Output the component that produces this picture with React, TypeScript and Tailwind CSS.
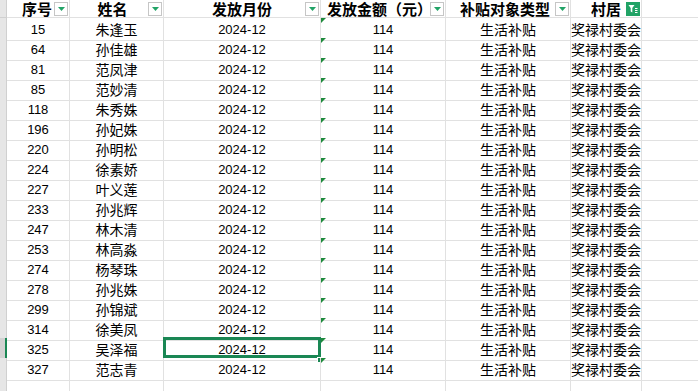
import React from 'react';

const rows: [string, string][] = [
  ['15', '朱逢玉'],
  ['64', '孙佳雄'],
  ['81', '范凤津'],
  ['85', '范妙清'],
  ['118', '朱秀姝'],
  ['196', '孙妃姝'],
  ['220', '孙明松'],
  ['224', '徐素娇'],
  ['227', '叶义莲'],
  ['233', '孙兆辉'],
  ['247', '林木清'],
  ['253', '林高淼'],
  ['274', '杨琴珠'],
  ['278', '孙兆姝'],
  ['299', '孙锦斌'],
  ['314', '徐美凤'],
  ['325', '吴泽福'],
  ['327', '范志青'],
];

const cols = 'grid grid-cols-[7px_63px_94px_157px_125px_125px_71px_1fr]';
const cell = 'relative flex items-center justify-center border-r border-b border-[#e1e1e1]';
const cjk = "font-['Noto_Sans_CJK_SC',sans-serif]";
const num = "font-['Liberation_Sans',Arial,sans-serif]";
// latin font first keeps the header line box inside the 17px row; CJK glyphs fall back to Noto
const head = `${cell} font-['Liberation_Sans','Noto_Sans_CJK_SC',sans-serif] font-bold text-[15px] leading-[17px]`;

function FilterBtn() {
  return (
    <span className="absolute right-[1px] top-[2px] w-[14px] h-[14px] bg-white border border-[#c6c6c6] flex items-center justify-center">
      <svg width="7" height="4" viewBox="0 0 7 4">
        <polygon points="0,0 7,0 3.5,4" fill="#21a366" />
      </svg>
    </span>
  );
}

function ActiveFilter() {
  return (
    <span className="absolute right-[1px] top-[2px] w-[14px] h-[14px] bg-[#21a366] flex items-center justify-center">
      <svg width="10" height="10" viewBox="0 0 10 10">
        <polygon points="0.5,1 6.5,1 4.3,4 4.3,8.5 2.7,7.5 2.7,4" fill="white" />
        <rect x="7" y="4" width="2.5" height="1" fill="white" />
        <rect x="7" y="6" width="2.5" height="1" fill="white" />
        <rect x="7" y="8" width="2.5" height="1" fill="white" />
      </svg>
    </span>
  );
}

function Tri() {
  return (
    <svg className="absolute left-0 top-0" width="5" height="5" viewBox="0 0 5 5">
      <polygon points="0,0 5,0 0,5" fill="#1e8a3c" />
    </svg>
  );
}

export default function App() {
  return (
    <div className="w-[698px] h-[391px] overflow-hidden bg-white text-black">
      {/* header */}
      <div className={`${cols} h-[18px]`}>
        <div className="bg-[#e6e6e6] border-r border-b border-[#d0d0d0]" />
        <div className={head}>
          <span className="relative top-[1px] mr-[2px]">序号</span>
          <FilterBtn />
        </div>
        <div className={head}>
          <span className="relative top-[1px] mr-[8px]">姓名</span>
          <FilterBtn />
        </div>
        <div className={head}>
          <span className="relative top-[1px]">发放月份</span>
          <FilterBtn />
        </div>
        <div className={`${head} !justify-start pl-[6px]`}>
          <span className="relative top-[1px]">发放金额（元）</span>
          <FilterBtn />
        </div>
        <div className={`${head} !justify-start pl-[14px]`}>
          <span className="relative top-[1px]">补贴对象类型</span>
          <FilterBtn />
        </div>
        <div className={head}>
          <span className="relative top-[1px]">村居</span>
          <ActiveFilter />
        </div>
        <div className="border-b border-[#e1e1e1]" />
      </div>

      {rows.map(([id, name]) => {
        const sel = id === '325';
        return (
          <div key={id} className={`${cols} h-[20px]`}>
            <div
              className={`border-b border-[#d0d0d0] ${
                sel ? 'bg-[#d2d2d2] border-r-2 border-r-[#1a8754]' : 'bg-[#e6e6e6] border-r'
              }`}
            />
            <div className={`${cell} ${num} text-[13px] pt-[2px]`}>{id}</div>
            <div className={`${cell} ${cjk} text-[14px] pt-[1px]`}>{name}</div>
            <div className={`${cell} ${num} text-[13px] pt-[2px]`}>
              2024-12
              {sel && (
                <>
                  <span className="absolute -left-[1px] -top-[1px] w-[158px] h-[21px] border-[3px] border-[#1a8754]" />
                  <span className="absolute -right-[3px] -bottom-[3px] w-[6px] h-[6px] bg-[#1a8754] border border-white" />
                </>
              )}
            </div>
            <div className={`${cell} ${num} text-[13px] pt-[2px]`}>
              <Tri />
              114
            </div>
            <div className={`${cell} ${cjk} text-[14px] pt-[1px]`}>生活补贴</div>
            <div className={`${cell} ${cjk} text-[14px] pt-[1px] whitespace-nowrap`}>奖禄村委会</div>
            <div className="border-b border-[#e1e1e1]" />
          </div>
        );
      })}

      {/* trailing empty row */}
      <div className={`${cols} h-[20px]`}>
        <div className="bg-[#e6e6e6] border-r border-b border-[#d0d0d0]" />
        <div className={cell} />
        <div className={cell} />
        <div className={cell} />
        <div className={cell} />
        <div className={cell} />
        <div className={cell} />
        <div className="border-b border-[#e1e1e1]" />
      </div>
    </div>
  );
}
